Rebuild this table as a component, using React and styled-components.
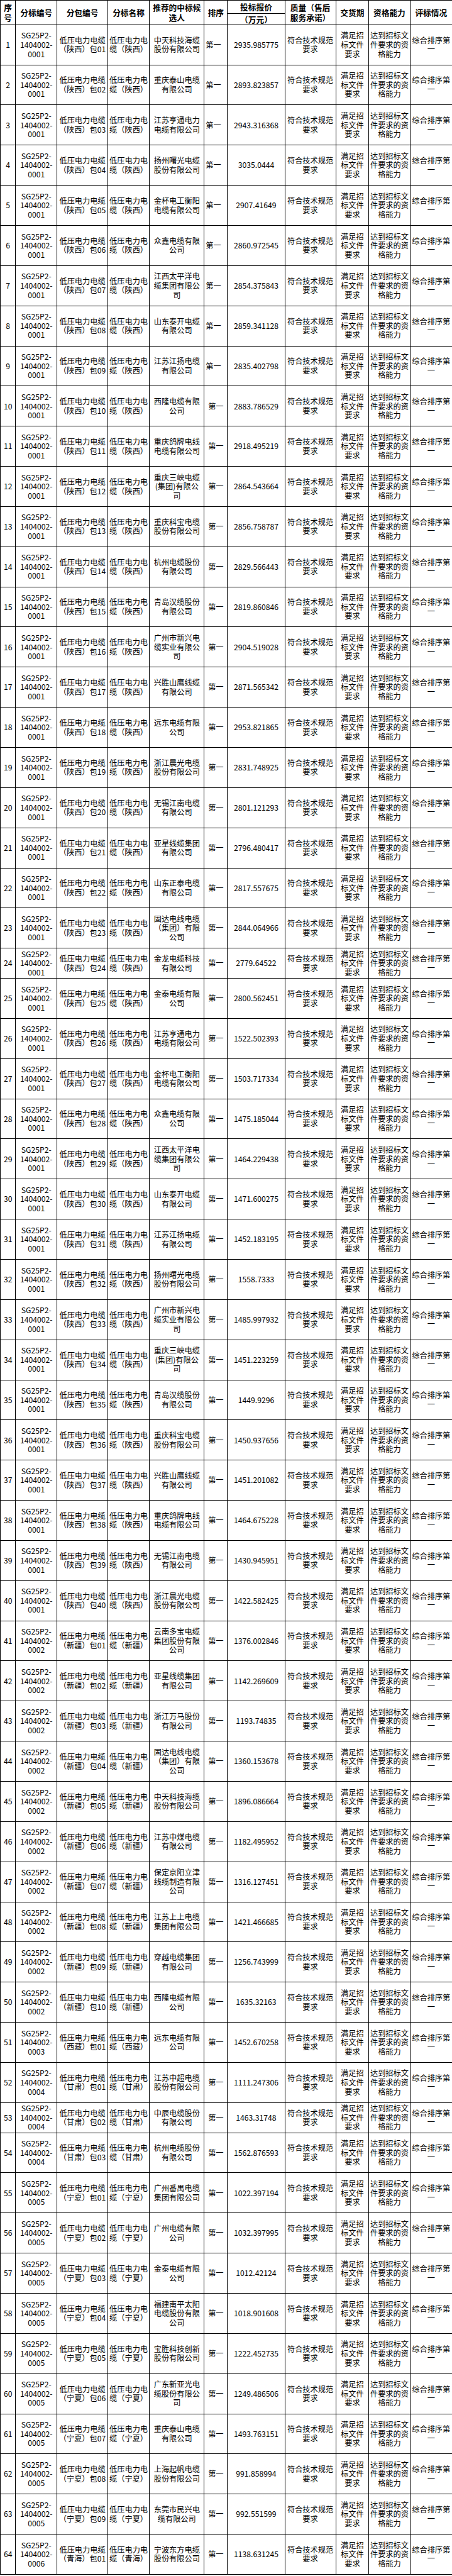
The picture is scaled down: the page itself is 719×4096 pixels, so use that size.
import React from 'react';
import styled, { createGlobalStyle } from 'styled-components';

const GlobalStyle = createGlobalStyle`
  html, body {
    margin: 0;
    padding: 0;
    background: #fff;
  }
  body {
    font-family: "Noto Sans CJK SC", "Noto Sans", sans-serif;
    color: #000;
  }
`;

const COLS = [24.3, 65.9, 80.7, 66.4, 87, 37.1, 91.2, 81, 52.7, 65.4, 67.3];

// company / price for each 分包, in order
const BIDS = [
  ['中天科技海缆/股份有限公司', '2935.985775'],
  ['重庆泰山电缆/有限公司', '2893.823857'],
  ['江苏亨通电力/电缆有限公司', '2943.316368'],
  ['扬州曙光电缆/股份有限公司', '3035.0444'],
  ['金杯电工衡阳/电缆有限公司', '2907.41649'],
  ['众鑫电缆有限/公司', '2860.972545'],
  ['江西太平洋电/缆集团有限公/司', '2854.375843'],
  ['山东泰开电缆/有限公司', '2859.341128'],
  ['江苏江扬电缆/有限公司', '2835.402798'],
  ['西隆电缆有限/公司', '2883.786529'],
  ['重庆鸽牌电线/电缆有限公司', '2918.495219'],
  ['重庆三峡电缆/(集团)有限公/司', '2864.543664'],
  ['重庆科宝电缆/股份有限公司', '2856.758787'],
  ['杭州电缆股份/有限公司', '2829.566443'],
  ['青岛汉缆股份/有限公司', '2819.860846'],
  ['广州市新兴电/缆实业有限公/司', '2904.519028'],
  ['兴胜山鹰线缆/有限公司', '2871.565342'],
  ['远东电缆有限/公司', '2953.821865'],
  ['浙江晨光电缆/股份有限公司', '2831.748925'],
  ['无锡江南电缆/有限公司', '2801.121293'],
  ['亚星线缆集团/有限公司', '2796.480417'],
  ['山东正泰电缆/有限公司', '2817.557675'],
  ['固达电线电缆/（集团）有限/公司', '2844.064966'],
  ['金龙电缆科技/有限公司', '2779.64522'],
  ['金泰电缆有限/公司', '2800.562451'],
  ['江苏亨通电力/电缆有限公司', '1522.502393'],
  ['金杯电工衡阳/电缆有限公司', '1503.717334'],
  ['众鑫电缆有限/公司', '1475.185044'],
  ['江西太平洋电/缆集团有限公/司', '1464.229438'],
  ['山东泰开电缆/有限公司', '1471.600275'],
  ['江苏江扬电缆/有限公司', '1452.183195'],
  ['扬州曙光电缆/股份有限公司', '1558.7333'],
  ['广州市新兴电/缆实业有限公/司', '1485.997932'],
  ['重庆三峡电缆/(集团)有限公/司', '1451.223259'],
  ['青岛汉缆股份/有限公司', '1449.9296'],
  ['重庆科宝电缆/股份有限公司', '1450.937656'],
  ['兴胜山鹰线缆/有限公司', '1451.201082'],
  ['重庆鸽牌电线/电缆有限公司', '1464.675228'],
  ['无锡江南电缆/有限公司', '1430.945951'],
  ['浙江晨光电缆/股份有限公司', '1422.582425'],
  ['云南多宝电缆/集团股份有限/公司', '1376.002846'],
  ['亚星线缆集团/有限公司', '1142.269609'],
  ['浙江万马股份/有限公司', '1193.74835'],
  ['固达电线电缆/（集团）有限/公司', '1360.153678'],
  ['中天科技海缆/股份有限公司', '1896.086664'],
  ['江苏中煤电缆/有限公司', '1182.495952'],
  ['保定京阳立津/线缆制造有限/公司', '1316.127451'],
  ['江苏上上电缆/集团有限公司', '1421.466685'],
  ['穿越电缆集团/有限公司', '1256.743999'],
  ['西隆电缆有限/公司', '1635.32163'],
  ['远东电缆有限/公司', '1452.670258'],
  ['江苏中超电缆/股份有限公司', '1111.247306'],
  ['中辰电缆股份/有限公司', '1463.31748'],
  ['杭州电缆股份/有限公司', '1562.876593'],
  ['广州番禺电缆/集团有限公司', '1022.397194'],
  ['广州电缆有限/公司', '1032.397995'],
  ['金泰电缆有限/公司', '1012.42124'],
  ['福建南平太阳/电缆股份有限/公司', '1018.901608'],
  ['宝胜科技创新/股份有限公司', '1222.452735'],
  ['广东新亚光电/缆股份有限公/司', '1249.486506'],
  ['重庆泰山电缆/有限公司', '1493.763151'],
  ['上海起帆电缆/股份有限公司', '991.858994'],
  ['东莞市民兴电/缆有限公司', '992.551599'],
  ['宁波东方电缆/股份有限公司', '1138.631245'],
];

// region, code suffix, first row (1-based) of the region
const REGIONS = [
  { name: '陕西', code: '0001', from: 1 },
  { name: '新疆', code: '0002', from: 41 },
  { name: '西藏', code: '0003', from: 51 },
  { name: '甘肃', code: '0004', from: 52 },
  { name: '宁夏', code: '0005', from: 55 },
  { name: '青海', code: '0006', from: 64 },
];

const SHORT_ROWS = [24, 53];

const rows = BIDS.map(([company, price], i) => {
  const no = i + 1;
  const region = [...REGIONS].reverse().find((r) => no >= r.from);
  const pack = String(no - region.from + 1).padStart(2, '0');
  return {
    no,
    code: `SG25P2-/1404002-/${region.code}`,
    pack: `低压电力电缆/（${region.name}）包${pack}`,
    name: `低压电力电/缆（${region.name}）`,
    company,
    price,
  };
});

const Sheet = styled.table`
  width: 719px;
  border-collapse: collapse;
  table-layout: fixed;
  font-size: 12.2px;
  line-height: 14.6px;
`;

const HeadRow = styled.tr`
  height: ${(p) => p.$h}px;
`;

const HeadCell = styled.th`
  border: 1px solid #000;
  padding: 0;
  font-weight: 700;
  font-size: 12.7px;
  line-height: 15.5px;
  text-align: center;
  vertical-align: middle;
  white-space: nowrap;
`;

const Row = styled.tr`
  height: ${(p) => (p.$short ? 47.9 : 63.85)}px;
`;

const Cell = styled.td`
  border: 1px solid #000;
  padding: 0 0 0 ${(p) => (p.$left ? '2px' : '0')};
  text-align: ${(p) => (p.$left ? 'left' : 'center')};
  vertical-align: middle;
  white-space: nowrap;
  overflow: hidden;
`;

const Lines = ({ text }) =>
  text.split('/').map((line, i) => (
    <React.Fragment key={i}>
      {i > 0 && <br />}
      {line}
    </React.Fragment>
  ));

export default function App() {
  return (
    <>
      <GlobalStyle />
      <Sheet>
        <colgroup>
          {COLS.map((w, i) => (
            <col key={i} style={{ width: w }} />
          ))}
        </colgroup>
        <thead>
          <HeadRow $h={21.3}>
            <HeadCell rowSpan={2}>
              <Lines text="序/号" />
            </HeadCell>
            <HeadCell rowSpan={2}>分标编号</HeadCell>
            <HeadCell rowSpan={2}>分包编号</HeadCell>
            <HeadCell rowSpan={2}>分标名称</HeadCell>
            <HeadCell rowSpan={2}>
              <Lines text="推荐的中标候/选人" />
            </HeadCell>
            <HeadCell rowSpan={2}>排序</HeadCell>
            <HeadCell>投标报价</HeadCell>
            <HeadCell rowSpan={2}>
              <Lines text="质量（售后/服务承诺）" />
            </HeadCell>
            <HeadCell rowSpan={2}>交货期</HeadCell>
            <HeadCell rowSpan={2}>资格能力</HeadCell>
            <HeadCell rowSpan={2}>评标情况</HeadCell>
          </HeadRow>
          <HeadRow $h={17.5}>
            <HeadCell>（万元）</HeadCell>
          </HeadRow>
        </thead>
        <tbody>
          {rows.map((r) => (
            <Row key={r.no} $short={SHORT_ROWS.includes(r.no)}>
              <Cell>{r.no}</Cell>
              <Cell>
                <Lines text={r.code} />
              </Cell>
              <Cell>
                <Lines text={r.pack} />
              </Cell>
              <Cell>
                <Lines text={r.name} />
              </Cell>
              <Cell>
                <Lines text={r.company} />
              </Cell>
              <Cell $left={r.no < 10}>第一</Cell>
              <Cell>{r.price}</Cell>
              <Cell>
                <Lines text="符合技术规范/要求" />
              </Cell>
              <Cell>
                <Lines text="满足招/标文件/要求" />
              </Cell>
              <Cell>
                <Lines text="达到招标文/件要求的资/格能力" />
              </Cell>
              <Cell>
                <Lines text="综合排序第/一" />
              </Cell>
            </Row>
          ))}
        </tbody>
      </Sheet>
    </>
  );
}
